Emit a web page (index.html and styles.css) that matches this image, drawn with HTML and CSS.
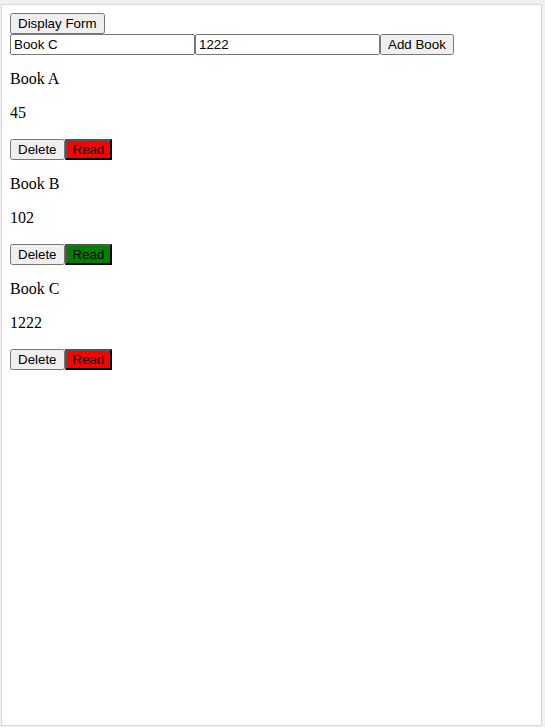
FILE: index.html
```html
<!DOCTYPE html>
<html>
<head>
<meta charset="utf-8">
<link rel="stylesheet" href="styles.css">
</head>
<body>
<div class="frame">
  <button class="btn">Display Form</button>
  <div class="form"><input class="field" type="text" value="Book C"><input class="field" type="text" value="1222"><button class="btn">Add Book</button></div>
  <div class="book">
    <p class="line">Book A</p>
    <p class="line">45</p>
    <div class="actions"><button class="btn">Delete</button><button class="btn read unread">Read</button></div>
  </div>
  <div class="book">
    <p class="line">Book B</p>
    <p class="line">102</p>
    <div class="actions"><button class="btn">Delete</button><button class="btn read done">Read</button></div>
  </div>
  <div class="book">
    <p class="line">Book C</p>
    <p class="line">1222</p>
    <div class="actions"><button class="btn">Delete</button><button class="btn read unread">Read</button></div>
  </div>
</div>
</body>
</html>
```
FILE: styles.css
```css
html, body {
  margin: 0;
  padding: 0;
  background: #f0f0f0;
  height: 727px;
  overflow: hidden;
}
.frame {
  box-sizing: border-box;
  margin: 4px 0 0 1px;
  width: 541px;
  height: 722px;
  border: 1px solid #d8d8d8;
  background: #fff;
  padding: 8px;
  font-family: "Liberation Serif", serif;
  font-size: 16px;
  color: #000;
}
.btn {
  font-family: "Liberation Sans", Arial, sans-serif;
  font-size: 13.333px;
}
.form {
  display: flex;
}
.field {
  box-sizing: border-box;
  width: 185px;
  height: 21px;
  font-family: "Liberation Sans", Arial, sans-serif;
  font-size: 13.333px;
  margin: 0;
}
.line {
  margin: 16px 0;
  line-height: 16px;
  height: 16px;
  padding-bottom: 2px;
}
.actions {
  display: flex;
}
.read {
  color: #000;
}
.unread {
  background-color: red;
}
.done {
  background-color: green;
}
```
